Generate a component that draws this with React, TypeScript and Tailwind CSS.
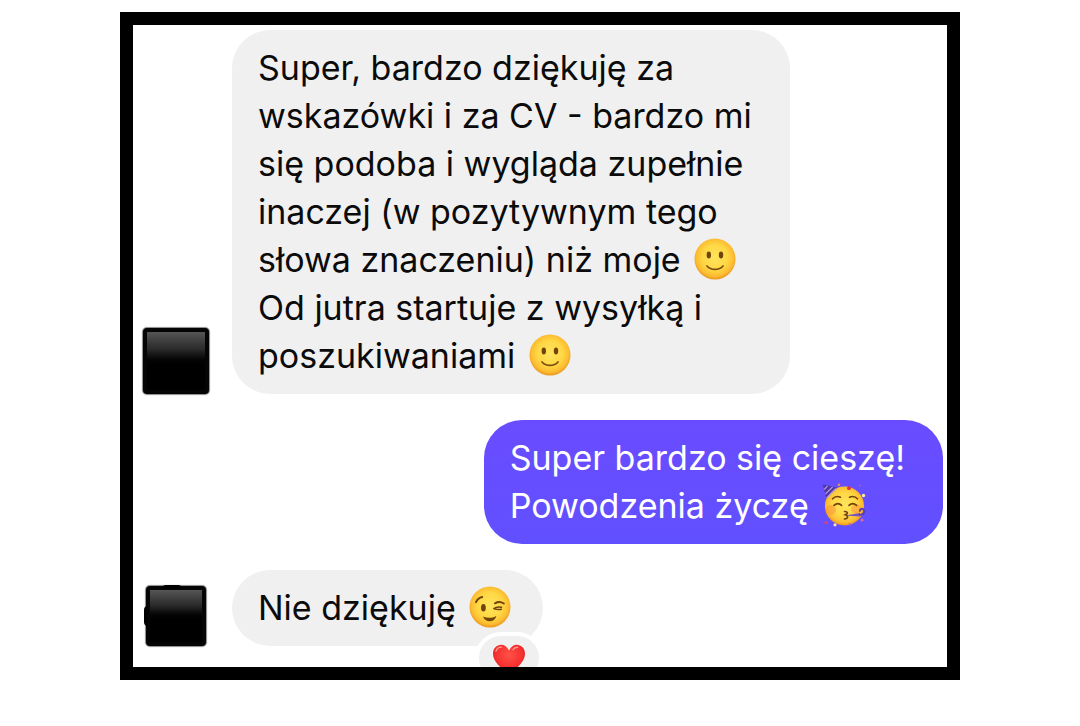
import type { ReactNode } from "react";
import { clsx } from "clsx";

function FaceGradient({ id }: { id: string }) {
  return (
    <defs>
      <radialGradient id={id} cx="50%" cy="46%" r="56%">
        <stop offset="0%" stopColor="#ffe45c" />
        <stop offset="55%" stopColor="#ffd745" />
        <stop offset="82%" stopColor="#fcbc30" />
        <stop offset="100%" stopColor="#e68a18" />
      </radialGradient>
    </defs>
  );
}

function SmileEmoji() {
  return (
    <svg
      viewBox="0 0 42 42"
      role="img"
      aria-label="Uśmiech"
      className="inline-block h-[42px] w-[42px] ml-1 -mt-2 align-middle"
    >
      <FaceGradient id="smile-face" />
      <circle cx="21" cy="21" r="20.5" fill="url(#smile-face)" />
      <ellipse cx="14.8" cy="17" rx="2.2" ry="3.4" fill="#70430b" />
      <ellipse cx="27" cy="17" rx="2.2" ry="3.4" fill="#70430b" />
      <path
        d="M13 28c4 4.600 12 4.600 16 0"
        fill="none"
        stroke="#7d4b0d"
        strokeWidth="1.7"
        strokeLinecap="round"
      />
    </svg>
  );
}

function WinkEmoji() {
  return (
    <svg
      viewBox="0 0 42 42"
      role="img"
      aria-label="Oczko"
      className="inline-block h-[42px] w-[42px] ml-1 -mt-2 align-middle"
    >
      <FaceGradient id="wink-face" />
      <circle cx="21" cy="21" r="20.5" fill="url(#wink-face)" />
      <ellipse cx="14.4" cy="21.8" rx="2.4" ry="3.8" fill="#70430b" />
      <g fill="none" stroke="#70430b" strokeLinecap="round" strokeLinejoin="round">
        <path d="M7 16.2c1.4-3 3.6-4.7 6.2-5.2" strokeWidth="2" />
        <path d="M26 17.3c3-1.7 6-1.6 8.8.2" strokeWidth="2" />
        <path d="M32.6 21.2c-3-.6-5.6-.3-7.8 1.4 2.6 1 5.2 1.2 7.6.6" strokeWidth="1.5" />
      </g>
      <path
        d="M14 30.500c4.200 1.800 9.200 1.800 13.400-.6-1 3.600-3.600 5.400-6.600 5.400-3.200 0-5.800-1.800-6.800-4.800z"
        fill="#70430b"
      />
    </svg>
  );
}

function PartyEmoji() {
  return (
    <svg
      viewBox="0 0 44 44"
      role="img"
      aria-label="Impreza"
      className="inline-block h-11 w-11 ml-1 -mt-2 align-middle"
    >
      <FaceGradient id="party-face" />
      <circle cx="22.5" cy="23" r="19.6" fill="url(#party-face)" />
      <circle cx="9" cy="27" r="5" fill="#fb8a3c" opacity=".45" />
      <circle cx="34" cy="26" r="5" fill="#fb8a3c" opacity=".45" />
      {/* hat */}
      <path d="M.8 1.4 4.5 16C7 11 10.500 7.500 15.500 4.800z" fill="#4f379f" />
      <path d="M2.200 6.500 5.500 3M3.400 11l7.200-7M4.600 15 14 5.500" stroke="#a995e6" strokeWidth="1.2" />
      {/* brows and closed eyes */}
      <g fill="none" stroke="#70430b" strokeWidth="1.6" strokeLinecap="round">
        <path d="M10.5 15.8c2-2.2 5-2.8 8-1.6" />
        <path d="M27.5 14.2c3-1.2 6-.6 8 1.6" />
        <path d="M12 22.4c2.4-2.2 5.4-2.2 7.6 0" />
        <path d="M27 22.4c2.2-2.2 5.2-2.2 7.6 0" />
        <path d="M22.5 28.5c3-.2 4.2 1.8.8 3.3 3.4 1 3 3.8-.9 4.2" />
      </g>
      {/* blower */}
      <path d="m26 32 12-2v3.400l-12-.6z" fill="#7a55c4" />
      <path
        d="M37 31.5c5 1 6.500-3 4.200-5.200-1.800-1.400-4 .6-2.700 2.200"
        fill="none"
        stroke="#5b3fae"
        strokeWidth="2"
      />
      {/* confetti */}
      <circle cx="27" cy="5.2" r="1.9" fill="#e0323c" />
      <circle cx="17" cy="1.8" r="1.3" fill="#f08a5a" />
      <circle cx="38" cy="2.5" r="1.1" fill="#9c5bd0" />
      <circle cx="41.5" cy="12.5" r="1.7" fill="#ffe9a0" />
      <circle cx="4" cy="39.5" r="1.6" fill="#e0416c" />
      <circle cx="13" cy="41.8" r="1.6" fill="#ffe0b0" />
      <circle cx="40" cy="37" r="1.5" fill="#e56a8c" />
      <circle cx="28" cy="41.5" r="1.2" fill="#a06ad6" />
    </svg>
  );
}

function HeartIcon() {
  return (
    <svg viewBox="0 0 34 31" role="img" aria-label="Serce" className="h-[31px] w-[34px]">
      <defs>
        <radialGradient id="heart-fill" cx="50%" cy="35%" r="65%">
          <stop offset="0%" stopColor="#ff5148" />
          <stop offset="65%" stopColor="#f5302f" />
          <stop offset="100%" stopColor="#c91c22" />
        </radialGradient>
      </defs>
      <path
        d="M17 6.5C15.2 2.6 12.4.8 9.3.8 4.7.8 1 4.4 1 9.600 1 18 9.500 24.500 17 30c7.500-5.500 16-12 16-20.400C33 4.400 29.300.8 24.700.8c-3.100 0-5.900 1.800-7.700 5.700z"
        fill="url(#heart-fill)"
      />
      <path
        d="M4 7c1-2.700 3.200-4 5.600-3.900M21 5.600c1.200-1.700 2.800-2.500 4.600-2.400"
        fill="none"
        stroke="#ff9a90"
        strokeWidth="1.4"
        strokeLinecap="round"
      />
    </svg>
  );
}

function Avatar({ small = false }: { small?: boolean }) {
  return (
    <div className="flex w-[99px] shrink-0 justify-center pr-[14px]">
      <div
        className={clsx(
          "relative rounded-sm bg-[#050505] p-1 shadow-[0_0_1px_1px_#8a8a8a]",
          small ? "size-[60px]" : "size-[66px]"
        )}
      >
        {small && (
          <>
            <span className="absolute -left-[2px] top-5 h-5 w-1 rounded-l-full bg-black" />
            <span className="absolute -top-px left-4 h-1 w-5 rounded-t-full bg-black" />
          </>
        )}
        <div className="relative h-full bg-linear-to-b from-[#565656] via-[#2a2a2a] via-30% to-black to-60%" />
      </div>
    </div>
  );
}

type BubbleProps = { own?: boolean; short?: boolean; children: ReactNode };

function Bubble({ own = false, short = false, children }: BubbleProps) {
  return (
    <div
      className={clsx(
        "relative rounded-[38px] py-[14px] pl-[26px]",
        short ? "pr-8" : "pr-[38px]",
        own ? "bg-linear-to-b from-[#694cff] to-[#6150ff] text-white" : "bg-[#f0f0f0] text-[#0b0b0b]"
      )}
    >
      {children}
    </div>
  );
}

export default function App() {
  return (
    <main className="min-h-screen bg-white px-4 pt-3 font-['Inter',sans-serif] text-[34px] leading-[48px]">
      <section className="mx-auto flex max-w-[840px] flex-col gap-[26px] overflow-hidden border-[13px] border-black bg-white pt-[5px] pb-[21px]">
        <div className="flex items-end">
          <Avatar />
          <Bubble>
            <p className="whitespace-nowrap">
              Super, bardzo dziękuję za
              <br />
              wskazówki i za CV - bardzo mi
              <br />
              się podoba i wygląda zupełnie
              <br />
              inaczej (w pozytywnym tego
              <br />
              słowa znaczeniu) niż moje <SmileEmoji />
              <br />
              Od jutra startuje z wysyłką i
              <br />
              poszukiwaniami <SmileEmoji />
            </p>
          </Bubble>
        </div>

        <div className="flex justify-end pr-1">
          <Bubble own>
            <p className="whitespace-nowrap">
              Super bardzo się cieszę!
              <br />
              Powodzenia życzę <PartyEmoji />
            </p>
          </Bubble>
        </div>

        <div className="flex items-end">
          <Avatar small />
          <Bubble short>
            <p className="whitespace-nowrap">
              Nie dziękuję <WinkEmoji />
            </p>
            <div className="absolute right-0 -bottom-[38px] flex h-[52px] w-[68px] justify-center rounded-[26px] border-4 border-white bg-[#f0f0f0] pt-2">
              <HeartIcon />
            </div>
          </Bubble>
        </div>
      </section>
    </main>
  );
}
